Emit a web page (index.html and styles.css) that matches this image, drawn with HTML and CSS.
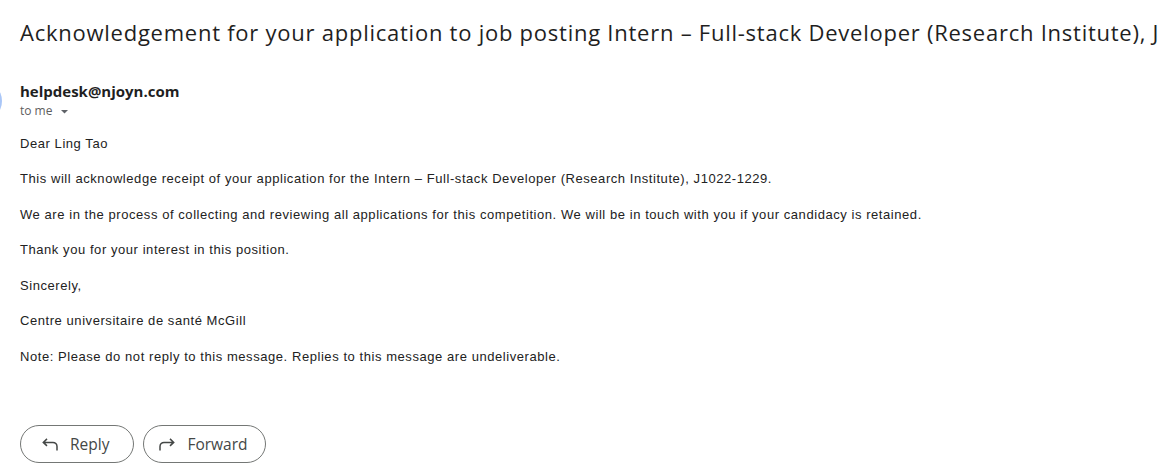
FILE: index.html
```html
<!DOCTYPE html>
<html>
<head>
<meta charset="utf-8">
<link rel="stylesheet" href="styles.css">
</head>
<body>
<div class="mail">
  <h1 class="subject">Acknowledgement for your application to job posting Intern – Full-stack Developer (Research Institute), J1022-1229</h1>
  <div class="sender-row">
    <div class="avatar"></div>
    <div class="sender">
      <div class="from">helpdesk@njoyn.com</div>
      <div class="to">to me <svg class="caret" width="7" height="4" viewBox="0 0 7 4"><path d="M0 0h7L3.5 3.5z" fill="#5f6368"/></svg></div>
    </div>
  </div>
  <div class="body">
    <p>Dear Ling Tao</p>
    <p>This will acknowledge receipt of your application for the Intern – Full-stack Developer (Research Institute), J1022-1229.</p>
    <p>We are in the process of collecting and reviewing all applications for this competition. We will be in touch with you if your candidacy is retained.</p>
    <p>Thank you for your interest in this position.</p>
    <p>Sincerely,</p>
    <p>Centre universitaire de santé McGill</p>
    <p>Note: Please do not reply to this message. Replies to this message are undeliverable.</p>
  </div>
  <div class="actions">
    <button class="btn btn-reply"><svg width="16" height="13" viewBox="0 0 16 13"><path d="M5 0.9L1.3 4.4 5 7.9M1.6 4.4H11a4 4 0 0 1 4 4v4" fill="none" stroke="#444746" stroke-width="1.5"/></svg><span>Reply</span></button>
    <button class="btn btn-forward"><svg width="16" height="13" viewBox="0 0 16 13"><path d="M11 0.9l3.7 3.5L11 7.9M14.4 4.4H5a4 4 0 0 0-4 4v4" fill="none" stroke="#444746" stroke-width="1.5"/></svg><span>Forward</span></button>
  </div>
</div>
</body>
</html>
```
FILE: styles.css
```css
html, body {
  margin: 0;
  padding: 0;
  background: #fff;
}
.mail {
  padding: 0 0 0 20px;
  overflow: hidden;
  width: 1158px;
  box-sizing: border-box;
}
.subject {
  margin: 0;
  padding-top: 17px;
  font-family: "Open Sans", sans-serif;
  font-weight: 400;
  font-size: 22px;
  line-height: 30px;
  letter-spacing: 0.75px;
  color: #1f1f1f;
  white-space: nowrap;
}
.sender-row {
  display: flex;
  margin-top: 34px;
  position: relative;
}
.avatar {
  position: absolute;
  left: -58px;
  top: 0;
  width: 40px;
  height: 40px;
  border-radius: 50%;
  background: #a9c6f7;
}
.sender {
  font-family: "Open Sans", sans-serif;
}
.from {
  font-size: 15px;
  font-weight: 700;
  color: #1f1f1f;
  line-height: 20px;
}
.to {
  font-size: 12px;
  color: #5e5e5e;
  line-height: 20px;
  display: flex;
  align-items: center;
  gap: 9px;
}
.caret {
  margin-top: 1px;
}
.body {
  margin-top: 13.5px;
  font-family: "Liberation Sans", Arial, sans-serif;
  font-size: 13px;
  letter-spacing: 0.56px;
  color: #222;
}
.body p {
  margin: 0 0 17.5px;
  line-height: 18px;
}
.body p:last-child {
  margin-bottom: 0;
}
.actions {
  display: flex;
  gap: 9px;
  margin-top: 59.5px;
}
.btn {
  display: flex;
  align-items: center;
  gap: 12px;
  height: 38px;
  box-sizing: border-box;
  border: 1px solid #747775;
  border-radius: 19px;
  background: #fff;
  font-family: "Open Sans", sans-serif;
  font-size: 15.5px;
  color: #444746;
}
.btn-reply {
  padding: 0 24px 0 21px;
}
.btn-forward {
  padding: 0 17px 0 15px;
}
.btn span {
  font-weight: 500;
}
```
